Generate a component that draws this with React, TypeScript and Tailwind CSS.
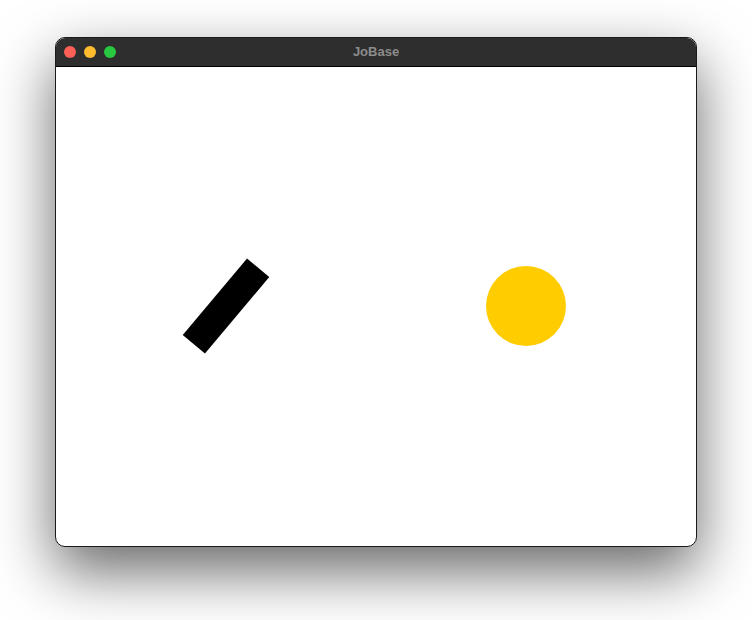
export default function App() {
  const lights = ['bg-[#fe5f57]', 'bg-[#febc2e]', 'bg-[#28c840]'];

  return (
    <div className="w-[752px] h-[620px] bg-white pt-[37px] pl-[55px]" style={{ fontFamily: '"Liberation Sans", Arial, sans-serif' }}>
      {/* Window */}
      <div className="w-[642px] rounded-[10px] border border-[#1a1a1a] bg-white overflow-hidden shadow-[0_24px_60px_rgba(0,0,0,0.6)]">
        {/* Title bar */}
        <div className="relative h-[29px] bg-[#2e2e2e] border-b border-black flex items-center px-[8px]">
          <div className="flex items-center gap-[8px]">
            {lights.map((c) => (
              <span key={c} className={`block w-[12px] h-[12px] rounded-full ${c}`} />
            ))}
          </div>
          <span className="absolute inset-0 flex items-center justify-center text-[13px] font-bold text-[#8c8c8c]">
            JoBase
          </span>
        </div>

        {/* Canvas */}
        <svg width="640" height="479" viewBox="0 0 640 479" className="block">
          <rect x="-50" y="-14.5" width="100" height="29" fill="#000" transform="translate(170 239) rotate(-50)" />
          <circle cx="470" cy="239" r="40" fill="#ffcc00" />
        </svg>
      </div>
    </div>
  );
}
